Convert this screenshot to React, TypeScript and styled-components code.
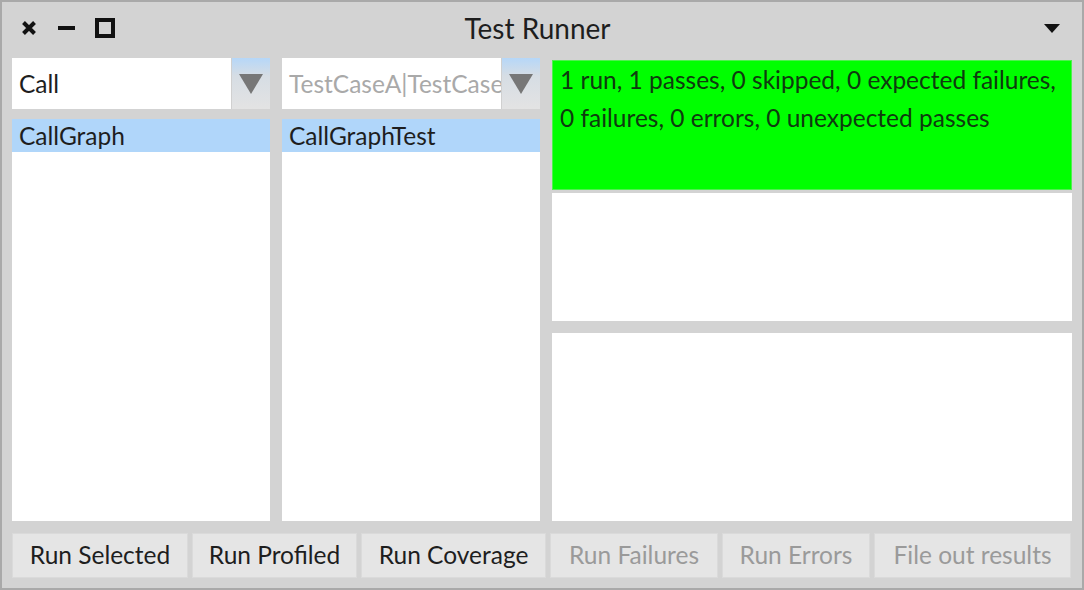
import React from "react";
import styled, { createGlobalStyle } from "styled-components";

const Global = createGlobalStyle`
  html, body { margin: 0; padding: 0; background: #ffffff; }
  body { font-family: Lato, "Open Sans", sans-serif; }
  * { box-sizing: border-box; }
`;

const Window = styled.div`
  width: 1084px;
  height: 590px;
  border: 2px solid #a9a9a9;
  background: #d3d3d3;
  display: flex;
  flex-direction: column;
`;

const TitleBar = styled.div`
  height: 56px;
  display: grid;
  grid-template-columns: 200px 1fr 200px;
  align-items: center;
  padding: 0 22px 4px 19px;
`;

const WinControls = styled.div`
  display: flex;
  align-items: center;
`;

const CtlSlot = styled.div<{ $w: number }>`
  width: ${(p) => p.$w}px;
  display: flex;
  align-items: center;
`;

const Title = styled.div`
  text-align: center;
  font-size: 28px;
  color: #1e1e1e;
  padding-right: 6px;
`;

const MenuArrow = styled.div`
  display: flex;
  justify-content: flex-end;
`;

const Body = styled.div`
  flex: 1;
  display: flex;
  flex-direction: column;
  padding: 0 10px 10px 10px;
  gap: 12px;
  min-height: 0;
`;

const Main = styled.div`
  flex: 1;
  display: flex;
  gap: 12px;
  min-height: 0;
`;

const Column = styled.div`
  width: 258px;
  display: flex;
  flex-direction: column;
  gap: 10px;
`;

const Combo = styled.div`
  height: 51px;
  display: flex;
  background: #ffffff;
`;

const ComboInput = styled.div<{ $placeholder?: boolean }>`
  flex: 1;
  min-width: 0;
  overflow: hidden;
  white-space: nowrap;
  display: flex;
  align-items: center;
  padding-left: 7px;
  font-size: 24.5px;
  color: ${(p) => (p.$placeholder ? "#a9a9a9" : "#1e1e1e")};
`;

const ComboButton = styled.div`
  width: 39px;
  display: flex;
  align-items: center;
  justify-content: center;
  background: linear-gradient(#b6d7f8 0%, #d6dde4 35%, #e3e3e3 100%);
  border-left: 1px solid #d0d0d0;
`;

const List = styled.div`
  flex: 1;
  background: #ffffff;
`;

const ListRow = styled.div<{ $selected?: boolean }>`
  height: 33px;
  display: flex;
  align-items: center;
  padding-left: 7px;
  font-size: 24.5px;
  color: #1e1e1e;
  background: ${(p) => (p.$selected ? "#b0d6fa" : "transparent")};
`;

const RightColumn = styled.div`
  flex: 1;
  display: flex;
  flex-direction: column;
  padding-top: 2px;
`;

const StatusPane = styled.div`
  height: 130px;
  background: #00ff00;
  border: 1px solid #4ef04e;
  padding: 0 7px;
  font-size: 24.5px;
  line-height: 38px;
  color: #0f3a0f;
  white-space: nowrap;
`;

const DetailPane = styled.div<{ $h?: number }>`
  background: #ffffff;
  ${(p) => (p.$h ? `height: ${p.$h}px;` : "flex: 1;")}
`;

const Spacer = styled.div<{ $h: number }>`
  height: ${(p) => p.$h}px;
`;

const ButtonBar = styled.div`
  height: 45px;
  display: flex;
  gap: 4px;
`;

const Button = styled.div<{ $w: number; $disabled?: boolean }>`
  width: ${(p) => p.$w}px;
  display: flex;
  align-items: center;
  justify-content: center;
  padding-bottom: 2px;
  background: #e5e5e5;
  border: 1px solid #dadada;
  font-size: 24.5px;
  color: ${(p) => (p.$disabled ? "#9a9a9a" : "#1e1e1e")};
  white-space: nowrap;
`;

const Triangle = ({ color, w, h }: { color: string; w: number; h: number }) => (
  <svg width={w} height={h} viewBox={`0 0 ${w} ${h}`}>
    <polygon points={`0,0 ${w},0 ${w / 2},${h}`} fill={color} />
  </svg>
);

const buttons = [
  { label: "Run Selected", w: 176 },
  { label: "Run Profiled", w: 165 },
  { label: "Run Coverage", w: 185 },
  { label: "Run Failures", w: 168, disabled: true },
  { label: "Run Errors", w: 148, disabled: true },
  { label: "File out results", w: 197, disabled: true },
];

export default function App() {
  return (
    <>
      <Global />
      <Window>
        <TitleBar>
          <WinControls>
            <CtlSlot $w={37}>
              <svg width="16" height="16" viewBox="0 0 16 16">
                <path d="M2.5 2.5 L13.5 13.5 M13.5 2.5 L2.5 13.5" stroke="#111" strokeWidth="4" />
              </svg>
            </CtlSlot>
            <CtlSlot $w={37}>
              <svg width="17" height="4" viewBox="0 0 17 4">
                <rect x="0" y="0" width="17" height="4" fill="#111" />
              </svg>
            </CtlSlot>
            <CtlSlot $w={30}>
              <svg width="20" height="20" viewBox="0 0 20 20">
                <rect x="2" y="2" width="16" height="16" fill="none" stroke="#111" strokeWidth="4" />
              </svg>
            </CtlSlot>
          </WinControls>
          <Title>Test Runner</Title>
          <MenuArrow>
            <Triangle color="#111" w={16} h={9} />
          </MenuArrow>
        </TitleBar>
        <Body>
          <Main>
            <Column>
              <Combo>
                <ComboInput>Call</ComboInput>
                <ComboButton>
                  <Triangle color="#777" w={24} h={20} />
                </ComboButton>
              </Combo>
              <List>
                <ListRow $selected>CallGraph</ListRow>
              </List>
            </Column>
            <Column>
              <Combo>
                <ComboInput $placeholder>TestCaseA|TestCaseB</ComboInput>
                <ComboButton>
                  <Triangle color="#777" w={24} h={20} />
                </ComboButton>
              </Combo>
              <List>
                <ListRow $selected>CallGraphTest</ListRow>
              </List>
            </Column>
            <RightColumn>
              <StatusPane>
                1 run, 1 passes, 0 skipped, 0 expected failures,
                <br />
                0 failures, 0 errors, 0 unexpected passes
              </StatusPane>
              <Spacer $h={3} />
              <DetailPane $h={128} />
              <Spacer $h={12} />
              <DetailPane />
            </RightColumn>
          </Main>
          <ButtonBar>
            {buttons.map((b) => (
              <Button key={b.label} $w={b.w} $disabled={b.disabled}>
                {b.label}
              </Button>
            ))}
          </ButtonBar>
        </Body>
      </Window>
    </>
  );
}
